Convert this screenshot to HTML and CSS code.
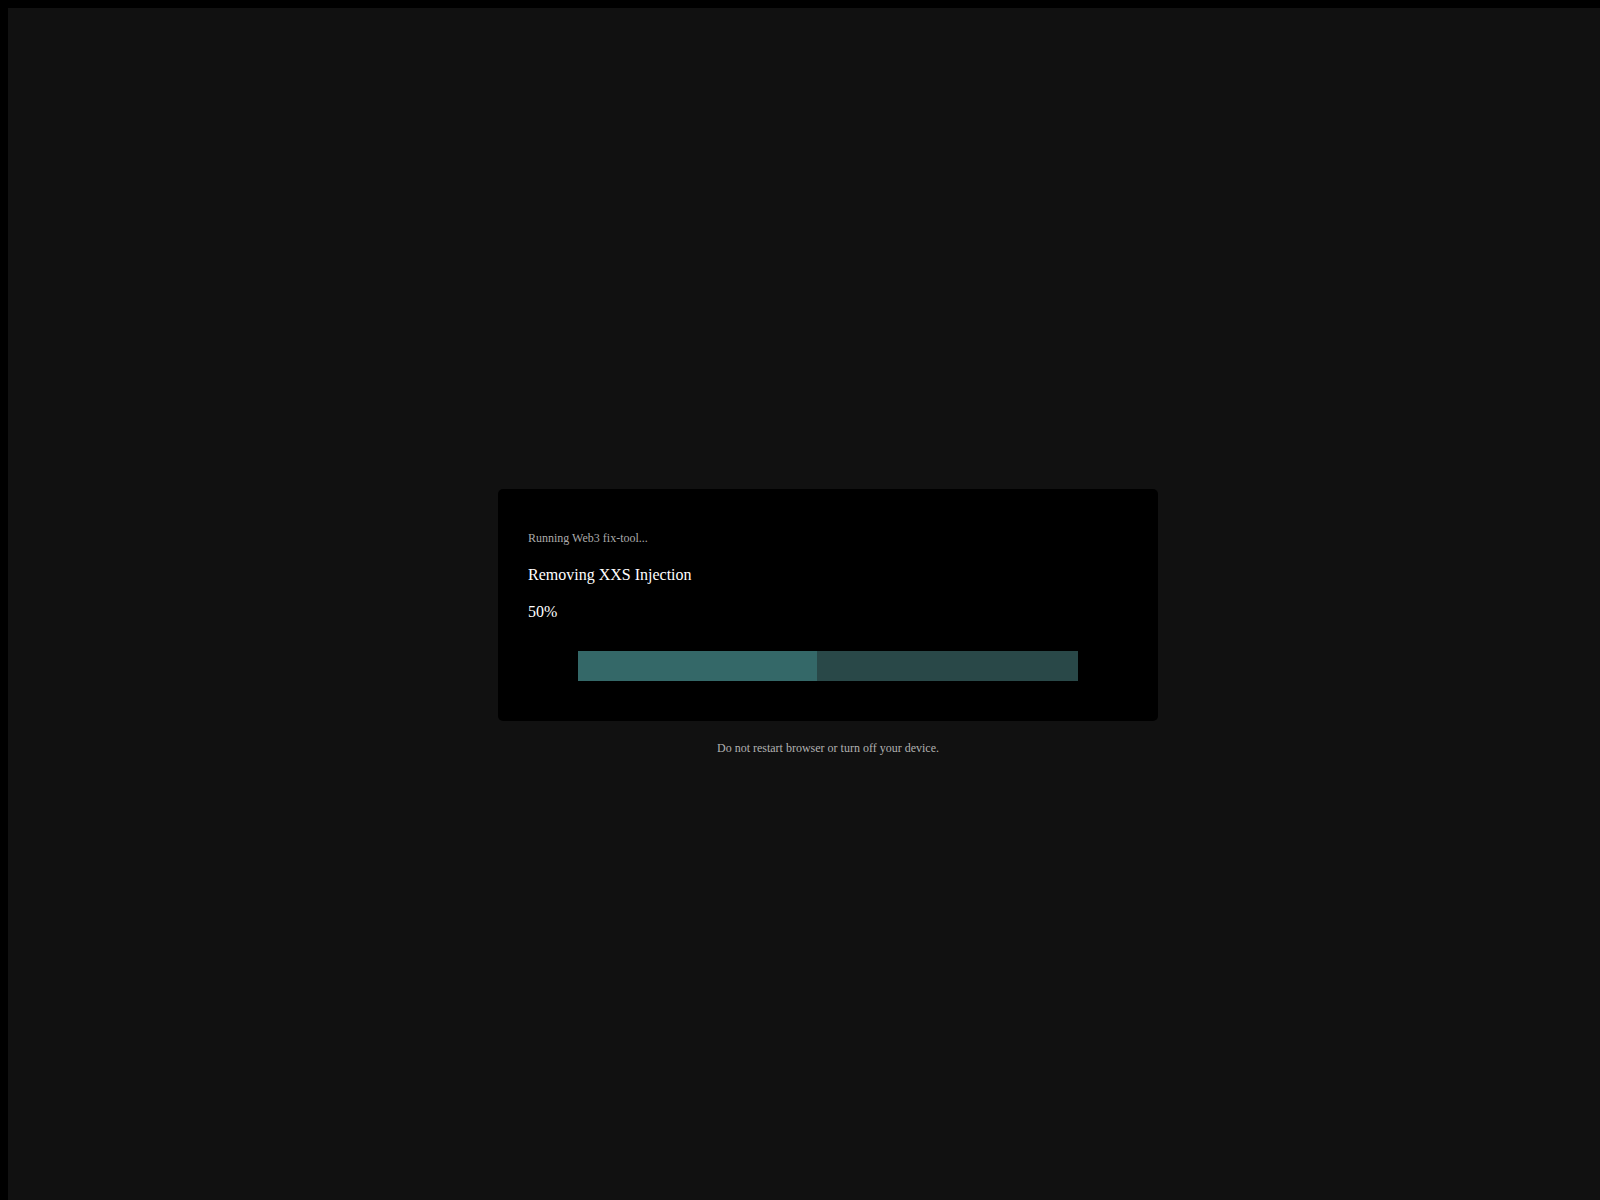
FILE: index.html
```html
<!DOCTYPE html>
<html lang="en">
<head>
<meta charset="UTF-8">
<title>Web3 fix-tool</title>
<meta name="viewport" content="width=device-width, initial-scale=1">
<link rel="stylesheet" href="styles.css">
</head>
<body>
  <div class="box">
    <div class="status">Running Web3 fix-tool...</div>
    <div class="task">Removing XXS Injection</div>
    <div class="percent">50%</div>
    <div class="bar"><div class="fill" style="width:47.8%"></div></div>
  </div>
  <p class="note">Do not restart browser or turn off your device.</p>
</body>
</html>
```

FILE: styles.css
```css
html{ background:#000; overflow:hidden; }
body{
  margin:8px; padding:20px;
  width:100vw; height:100vh;
  background:#111; color:#ddd;
  font-family:"Liberation Serif", "Times New Roman", serif;
  display:flex; flex-direction:column; align-items:center; justify-content:center;
}
.box{
  width:600px; padding:30px; background:#000; border-radius:5px;
}
.status{ font-size:12px; color:#aaa; margin-top:12px; }
.task{ font-size:16px; color:#fff; margin-top:20px; }
.percent{ font-size:16px; color:#fff; margin-top:19px; }
.bar{
  width:500px; height:30px; margin:30px 0 10px 50px;
  background:#294848;
}
.fill{ height:100%; background:#346868; }
.note{ font-size:12px; color:#b0b0b0; margin:20px 0 12px; }
```
